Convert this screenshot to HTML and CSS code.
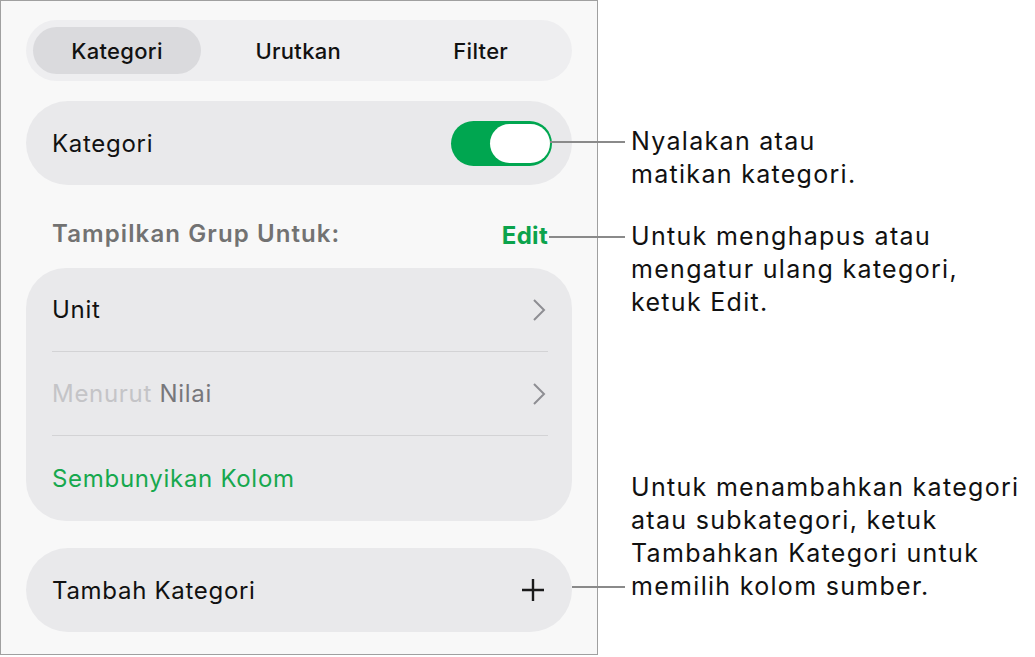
FILE: index.html
```html
<!DOCTYPE html>
<html lang="id">
<head>
  <meta charset="UTF-8">
  <meta name="viewport" content="width=device-width, initial-scale=1.0">
  <title>Kategori</title>
  <link rel="stylesheet" href="styles.css">
</head>
<body>

  <div class="page">
    <div class="panel">
      <div class="segmented">
        <div class="segment selected">Kategori</div>
        <div class="segment">Urutkan</div>
        <div class="segment">Filter</div>
      </div>

      <div class="card row toggle-row">
        <span>Kategori</span>
        <div class="toggle"><div class="knob"></div></div>
      </div>

      <div class="section-head">
        <span>Tampilkan Grup Untuk:</span>
        <span class="edit">Edit</span>
      </div>

      <div class="card group">
        <div class="row">
          <span>Unit</span>
          <svg class="chevron" viewBox="0 0 14 24"><path d="M2 2 L12 12 L2 22" /></svg>
        </div>
        <div class="row">
          <span><span class="dim">Menurut</span> <span class="mid">Nilai</span></span>
          <svg class="chevron" viewBox="0 0 14 24"><path d="M2 2 L12 12 L2 22" /></svg>
        </div>
        <div class="row">
          <span class="green">Sembunyikan Kolom</span>
        </div>
      </div>

      <div class="card row">
        <span>Tambah Kategori</span>
        <svg class="plus" viewBox="0 0 24 24"><path d="M12 1 V23 M1 12 H23" /></svg>
      </div>
    </div>

    <div class="notes">
      <p class="note note-toggle">Nyalakan atau<br>matikan kategori.</p>
      <p class="note note-edit">Untuk menghapus atau<br>mengatur ulang kategori,<br>ketuk Edit.</p>
      <p class="note note-add">Untuk menambahkan kategori<br>atau subkategori, ketuk<br>Tambahkan Kategori untuk<br>memilih kolom sumber.</p>
    </div>
  </div>

</body>
</html>
```

FILE: styles.css
```css
body {
  margin: 0;
  background: #ffffff;
  font-family: Inter, "Noto Sans", sans-serif;
  color: #111111;
}
.page {
  display: flex;
  width: 1035px;
  height: 657px;
}
.panel {
  box-sizing: border-box;
  width: 598px;
  height: 655px;
  border: 1px solid #a0a0a0;
  background: #f8f8f8;
  padding: 19px 25px 0 25px;
  display: flex;
  flex-direction: column;
}

/* segmented control */
.segmented {
  display: flex;
  height: 61px;
  box-sizing: border-box;
  padding: 7px 0 7px 7px;
  border-radius: 31px;
  background: #eeeef0;
}
.segment {
  flex: 1;
  display: flex;
  align-items: center;
  justify-content: center;
  font-size: 22px;
  font-weight: 500;
  letter-spacing: 0.3px;
  border-radius: 24px;
}
.segment.selected {
  flex: 0 0 168px;
  margin-right: 6px;
  background: #dadadd;
}

/* cards */
.card {
  background: #e9e9eb;
  border-radius: 42px;
}
.row {
  display: flex;
  align-items: center;
  justify-content: space-between;
  height: 84px;
  box-sizing: border-box;
  padding: 0 24px 0 26px;
  font-size: 24px;
  letter-spacing: 0.7px;
}
.panel > .card.row {
  margin-top: 20px;
}
.panel > .card.row:last-child {
  margin-top: 27px;
}
.toggle-row {
  padding-right: 20px;
}

.toggle {
  box-sizing: border-box;
  width: 101px;
  height: 45px;
  border-radius: 23px;
  background: #00a650;
  padding: 3px 2px;
  display: flex;
  justify-content: flex-end;
}
.knob {
  width: 60px;
  height: 39px;
  border-radius: 20px;
  background: #ffffff;
}

.section-head {
  display: flex;
  justify-content: space-between;
  align-items: center;
  height: 100px;
  box-sizing: border-box;
  padding: 0 24px 0 26px;
  margin-bottom: -17px;
  font-size: 24px;
  font-weight: 600;
  letter-spacing: 1.1px;
  color: #727272;
}
.section-head span:first-child {
  margin-top: -4px;
}
.edit {
  color: #0ba34c;
  font-weight: 700;
  font-size: 24px;
  letter-spacing: 0.3px;
}

.group {
  border-radius: 40px;
  padding: 0 24px 0 26px;
}
.group .row {
  padding: 0;
  height: 84px;
  border-bottom: 1px solid #d3d3d5;
}
.group .row:last-child {
  border-bottom: none;
  height: 85px;
}
.dim {
  color: #c4c4c7;
}
.mid {
  color: #77777b;
}
.green {
  color: #17a84e;
}
.chevron {
  width: 14px;
  height: 24px;
  fill: none;
  stroke: #8e8e93;
  stroke-width: 2;
  margin-right: 2px;
}
.plus {
  width: 24px;
  height: 24px;
  fill: none;
  stroke: #1a1a1a;
  stroke-width: 2.4;
  margin-right: 3px;
}

/* callouts on the right */
.notes {
  padding-left: 33px;
}
.note {
  position: relative;
  margin: 0;
  font-size: 25px;
  line-height: 33px;
  letter-spacing: 1.3px;
  color: #111111;
}
.note::before {
  content: "";
  position: absolute;
  top: 16px;
  right: 100%;
  margin-right: 6px;
  height: 2px;
  background: #8a8a8a;
}
.note-toggle {
  margin-top: 125px;
}
.note-toggle::before {
  width: 75px;
}
.note-edit {
  margin-top: 29px;
}
.note-edit::before {
  width: 76px;
}
.note-add {
  margin-top: 152px;
}
.note-add::before {
  top: 115px;
  width: 53px;
}
```
